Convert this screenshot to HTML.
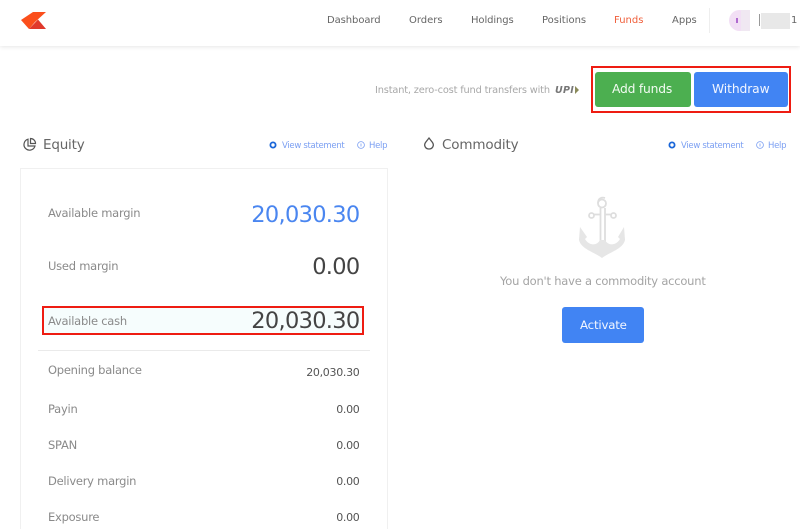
<!DOCTYPE html>
<html><head><meta charset="utf-8"><style>
html,body{margin:0;padding:0;background:#fff}
#p{position:relative;width:800px;height:529px;overflow:hidden;background:#fff;font-family:"DejaVu Sans","Liberation Sans",sans-serif;color:#666;filter:blur(.3px)}
#p span,#p div.t{position:absolute;white-space:nowrap;line-height:16px}
.nav{font-size:10px;top:13px;color:#666}
.l{font-size:11.5px;color:#8a8a8a;left:48px;letter-spacing:-.25px}
.v{font-size:11px;color:#555;right:440.500px;letter-spacing:-.3px}
.b{font-size:22.500px;right:440.500px;color:#444;letter-spacing:-.7px;line-height:30px!important}
.lnk{font-size:8.500px;color:#7b9ff2;letter-spacing:-.3px}
.abs{position:absolute}
</style></head><body><div id="p">
<div class="abs" style="left:0;top:0;width:800px;height:46px;background:#fff;box-shadow:0 1px 4px rgba(0,0,0,.1)"></div>
<svg class="abs" style="left:20px;top:11px" width="28" height="19" viewBox="0 0 28 19"><path d="M1 9 13 1H26L15 11 9 18Z" fill="#fb4f1c"/><path d="M18 8.500 26 18H9Z" fill="#e0392c"/></svg>
<span class="nav" style="left:327px;letter-spacing:-.08px">Dashboard</span>
<span class="nav" style="left:409px">Orders</span>
<span class="nav" style="left:471px;letter-spacing:-.1px">Holdings</span>
<span class="nav" style="left:542px">Positions</span>
<span class="nav" style="left:614px;color:#f0603c">Funds</span>
<span class="nav" style="left:672px">Apps</span>
<div class="abs" style="left:709px;top:8px;width:1px;height:25px;background:#eee"></div>
<div class="abs" style="left:729px;top:10px;width:21px;height:21px;border-radius:50%;background:#f2dff5"></div>
<div class="abs" style="left:736px;top:18px;width:2px;height:5px;background:#b06ad0"></div>
<div class="abs" style="left:741px;top:10px;width:9px;height:21px;background:#f0e8f2"></div>
<div class="abs" style="left:759px;top:14px;width:1px;height:12px;background:#999"></div>
<div class="abs" style="left:761px;top:13px;width:29px;height:16px;background:#e8e8e8"></div>
<span class="nav" style="left:791px;color:#666">1</span>

<span style="left:375px;top:83px;font-size:9.800px;color:#a8a8a8;letter-spacing:-.17px">Instant, zero-cost fund transfers with</span>
<span style="left:555px;top:83px;font-size:9.500px;font-weight:bold;font-style:italic;color:#777;letter-spacing:.3px">UPI</span>
<svg class="abs" style="left:575px;top:86px" width="5" height="8"><path d="M0 0 4 4 0 8Z" fill="#8a8a5a"/></svg>

<div class="abs" style="left:591px;top:66px;width:196px;height:43px;border:2px solid #ee1c12"></div>
<div class="abs" style="left:595px;top:72px;width:96px;height:35px;background:#4caf50;border-radius:3px"></div>
<div class="abs" style="left:694px;top:72px;width:94px;height:35px;background:#4184f3;border-radius:3px"></div>
<span style="left:612px;top:81px;font-size:12.300px;color:#f2fbf2;letter-spacing:-.2px">Add funds</span>
<span style="left:712px;top:81px;font-size:12.300px;color:#f2f6ff;letter-spacing:-.1px">Withdraw</span>

<svg class="abs" style="left:22px;top:137px" width="15" height="15" viewBox="0 0 15 15" fill="none" stroke="#555" stroke-width="1.200"><path d="M6 2.200A5.600 5.600 0 1 0 13 9H6Z"/><path d="M8.500 1.500A5 5 0 0 1 13.500 6.500H8.500Z"/></svg>
<span style="left:43px;top:137px;font-size:13.500px;color:#666;letter-spacing:-.2px">Equity</span>
<svg class="abs" style="left:269px;top:141px" width="8" height="8"><circle cx="4" cy="4" r="2.600" fill="none" stroke="#1a66d8" stroke-width="1.800"/></svg>
<span class="lnk" style="left:282px;top:138px">View statement</span>
<svg class="abs" style="left:357px;top:141px" width="8" height="8"><circle cx="4" cy="4" r="3.400" fill="none" stroke="#7b9ff2" stroke-width=".8"/><path d="M4 2.500V5.500" stroke="#7b9ff2" stroke-width=".8"/></svg>
<span class="lnk" style="left:369px;top:138px">Help</span>

<svg class="abs" style="left:422px;top:136px" width="14" height="15" viewBox="0 0 14 15"><path d="M7 2 10.500 6.500C12.600 9.800 10.200 13 7 13S1.400 9.800 3.500 6.500Z" fill="none" stroke="#555" stroke-width="1.300"/></svg>
<span style="left:442px;top:137px;font-size:13.500px;color:#666;letter-spacing:-.15px">Commodity</span>
<svg class="abs" style="left:668px;top:141px" width="8" height="8"><circle cx="4" cy="4" r="2.600" fill="none" stroke="#1a66d8" stroke-width="1.800"/></svg>
<span class="lnk" style="left:681px;top:138px">View statement</span>
<svg class="abs" style="left:756px;top:141px" width="8" height="8"><circle cx="4" cy="4" r="3.400" fill="none" stroke="#7b9ff2" stroke-width=".8"/><path d="M4 2.500V5.500" stroke="#7b9ff2" stroke-width=".8"/></svg>
<span class="lnk" style="left:768px;top:138px">Help</span>

<div class="abs" style="left:20px;top:168px;width:368px;height:370px;border:1px solid #f0f0f0;box-sizing:border-box"></div>

<span class="l" style="left:48px;top:205px">Available margin</span>
<span class="b" style="top:200px;color:#4a86f0">20,030.30</span>
<span class="l" style="top:258px">Used margin</span>
<span class="b" style="top:252px">0.00</span>

<div class="abs" style="left:42px;top:306px;width:322px;height:29px;border:2px solid #ee1c12;background:#f6fdfd;box-sizing:border-box"></div>
<span class="l" style="top:313px">Available cash</span>
<span class="b" style="top:306px">20,030.30</span>
<div class="abs" style="left:38px;top:350px;width:332px;height:1px;background:#eaeaea"></div>

<span class="l" style="top:362px">Opening balance</span><span class="v" style="top:365px">20,030.30</span>
<span class="l" style="top:401px">Payin</span><span class="v" style="top:401.500px">0.00</span>
<span class="l" style="top:437px">SPAN</span><span class="v" style="top:437.500px">0.00</span>
<span class="l" style="top:473px">Delivery margin</span><span class="v" style="top:473.500px">0.00</span>
<span class="l" style="top:509px">Exposure</span><span class="v" style="top:509.500px">0.00</span>

<svg class="abs" style="left:570px;top:190px" width="66" height="72" viewBox="0 0 66 72"><g fill="none" stroke="#dedede" stroke-width="1.800"><circle cx="32" cy="13.500" r="4"/><path d="M28 13C28 8 32 7 35 8"/><path d="M30.500 18V58M35 18V58"/><path d="M24 24.500H30.500M35 24.500H41"/><circle cx="21.500" cy="25.500" r="2.500"/><circle cx="43.500" cy="25.500" r="2.500"/></g><path d="M10 37 9 50C11 59 24 62 32 68 40 62 53 59 55 50L54 37 48 47 50 49C46 56 38 56 35 50H30C27 56 19 56 15 49L17 47Z" fill="#e6e6e6"/></svg>

<span style="left:500px;top:273px;font-size:11.500px;color:#a4a4a4;letter-spacing:-.22px">You don't have a commodity account</span>
<div class="abs" style="left:562px;top:307px;width:82px;height:36px;background:#4184f3;border-radius:3px"></div>
<span style="left:580px;top:317px;font-size:11.800px;color:#f2f6ff;letter-spacing:-.2px">Activate</span>
</div></body></html>
